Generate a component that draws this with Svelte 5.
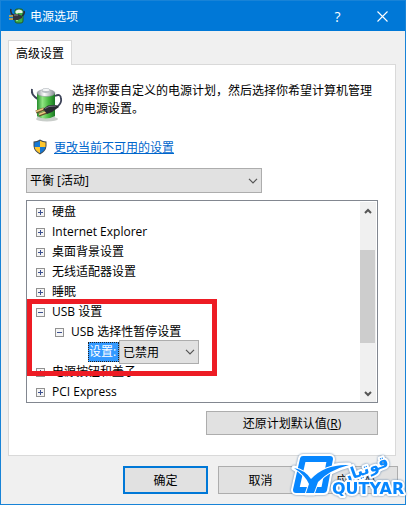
<script>
	let plan = $state("平衡 [活动]");
	let suspend = $state("已禁用");
	let open = $state({ usb: true, suspend: true });

	const before = ["硬盘", "Internet Explorer", "桌面背景设置", "无线适配器设置", "睡眠"];
	const after = ["电源按钮和盖子", "PCI Express"];
</script>

{#snippet expander(isOpen, name, toggle)}
	<button class="expander" aria-label={name} aria-expanded={isOpen} onclick={toggle}>
		<svg viewBox="0 0 9 9" width="9" height="9" shape-rendering="crispEdges">
			<rect x="0.5" y="0.5" width="8" height="8" fill="#f5f5f5" stroke="#919191" />
			<path d={isOpen ? "M2 4.5H7" : "M2 4.5H7M4.5 2V7"} stroke="#3b4f8f" />
		</svg>
	</button>
{/snippet}

{#snippet chevron()}
	<svg class="chevron" viewBox="0 0 10 6" width="10" height="6">
		<path d="M1 0.8L5 4.8L9 0.8" fill="none" stroke="#555" stroke-width="1.2" />
	</svg>
{/snippet}

{#snippet scrollArrow(d)}
	<svg viewBox="0 0 8 6" width="8" height="6">
		<path {d} fill="none" stroke="#555" stroke-width="2" />
	</svg>
{/snippet}

<main class="window">
	<header>
		<svg class="app-icon" viewBox="0 0 16 16" width="16" height="16">
			<rect x="6" y="1" width="8" height="14" rx="2" fill="#3fae49" stroke="#235f2b" />
			<path d="M6.500 3Q10 0 13.500 3V5H6.500Z" fill="#e5f3e5" />
			<path d="M8 5V13" stroke="#a4ec9c" stroke-width="1.500" />
			<path d="M2 1Q1 5 4 7M13 8Q16 6 15 3" fill="none" stroke="#282a35" stroke-width="1.500" />
			<path d="M0 8H5M0 11H5" stroke="#e4aa36" stroke-width="1.500" />
			<path d="M4 6L9 6L13 8V10L9 12H4Z" fill="#34343c" />
			<path d="M5 7H9" stroke="#8d8d94" />
		</svg>
		<h1>电源选项</h1>
		<button class="caption" aria-label="帮助">?</button>
		<button class="caption" aria-label="关闭">
			<svg viewBox="0 0 11 11" width="11" height="11">
				<path d="M0.500 0.500L10.500 10.500M10.500 0.500L0.500 10.500" stroke="#fff" stroke-width="1.100" />
			</svg>
		</button>
	</header>

	<div class="content">
		<div class="tabs" role="tablist">
			<button class="tab" role="tab" aria-selected="true">高级设置</button>
		</div>

		<section class="panel">
			<div class="intro">
				<svg class="battery" viewBox="0 0 32 34" width="32" height="34">
					<defs>
						<linearGradient id="cell">
							<stop offset="0" stop-color="#258c2c" />
							<stop offset="0.3" stop-color="#91e583" />
							<stop offset="0.65" stop-color="#45b83f" />
							<stop offset="1" stop-color="#1b7625" />
						</linearGradient>
						<linearGradient id="metal">
							<stop offset="0" stop-color="#8e969b" />
							<stop offset="0.4" stop-color="#fff" />
							<stop offset="1" stop-color="#818a90" />
						</linearGradient>
					</defs>
					<ellipse cx="16" cy="31" rx="11" ry="2.500" fill="#c9cdca" />
					<path d="M1 1Q0 6 4 9Q6 11 8 11" fill="none" stroke="#3d4358" stroke-width="2" />
					<path d="M6 5V29Q14 34 24 29V5Z" fill="url(#cell)" />
					<path d="M6 28Q14 33 24 28V30Q15 35 6 30Z" fill="#c7d0c9" />
					<ellipse cx="15" cy="5" rx="9" ry="3.500" fill="url(#metal)" stroke="#899095" stroke-width="0.500" />
					<path d="M11 2V4Q15 6 19 4V2Z" fill="#b7bec3" />
					<ellipse cx="15" cy="2" rx="4" ry="1.600" fill="#f6f8f9" stroke="#9ca3a8" stroke-width="0.500" />
					<path d="M24 8Q30 5 30 11Q31 15 26 19" fill="none" stroke="#3d4358" stroke-width="1.800" />
					<path d="M5 24L13 21M8 27L16 24" stroke="#69502b" stroke-width="3" />
					<path d="M5 23.500L13 20.500M8 26.500L16 23.500" stroke="#e7c880" stroke-width="1.700" />
					<path d="M12 21L17 17.500L25 17L28 19L21 24L16 26Z" fill="#292a31" />
					<path d="M14 20.500L18 18.500L25 18" fill="none" stroke="#747580" />
				</svg>
				<p>选择你要自定义的电源计划，然后选择你希望计算机管理的电源设置。</p>
			</div>

			<div class="elevate">
				<svg viewBox="0 0 14 16" width="14" height="16">
					<path d="M7 0.500Q10 2.500 13.500 2.500V7Q13 12.500 7 15.500Q1 12.500 0.500 7V2.500Q4 2.500 7 0.500Z" fill="#424a50" />
					<path d="M7 1.700V8H1.500V3.500Q4.500 3.300 7 1.700Z" fill="#1678d3" />
					<path d="M7 1.700V8H12.500V3.500Q9.500 3.300 7 1.700Z" fill="#ffc72e" />
					<path d="M1.600 8H7V14.300Q2.200 12 1.600 8Z" fill="#ffc72e" />
					<path d="M12.400 8H7V14.300Q11.800 12 12.400 8Z" fill="#1678d3" />
				</svg>
				<a href="#settings">更改当前不可用的设置</a>
			</div>

			<div class="combo plan">
				<select aria-label="电源计划" bind:value={plan}>
					<option>平衡 [活动]</option>
				</select>
				{@render chevron()}
			</div>

			<div class="tree" id="settings">
				<ul>
					{#each before as name}
						<li><div class="row">{@render expander(false, name)}<span>{name}</span></div></li>
					{/each}
					<li>
						<div class="row">
							{@render expander(open.usb, "USB 设置", () => (open.usb = !open.usb))}
							<span>USB 设置</span>
						</div>
						{#if open.usb}
							<ul class="nested">
								<li>
									<div class="row">
										{@render expander(open.suspend, "USB 选择性暂停设置", () => (open.suspend = !open.suspend))}
										<span>USB 选择性暂停设置</span>
									</div>
									{#if open.suspend}
										<div class="row setting">
											<label for="suspend">设置:</label>
											<div class="combo">
												<select id="suspend" bind:value={suspend}>
													<option>已禁用</option>
													<option>已启用</option>
												</select>
												{@render chevron()}
											</div>
										</div>
									{/if}
								</li>
							</ul>
						{/if}
					</li>
					{#each after as name}
						<li><div class="row">{@render expander(false, name)}<span>{name}</span></div></li>
					{/each}
				</ul>
				<div class="scrollbar">
					<button aria-label="向上滚动">{@render scrollArrow("M1 5L4 2L7 5")}</button>
					<div class="track"><div class="thumb"></div></div>
					<button aria-label="向下滚动">{@render scrollArrow("M1 1L4 4L7 1")}</button>
				</div>
				<div class="highlight"></div>
			</div>

			<button class="btn restore">还原计划默认值(<u>R</u>)</button>
		</section>

		<footer>
			<button class="btn primary">确定</button>
			<button class="btn">取消</button>
			<button class="btn">应用(<u>A</u>)</button>
		</footer>
	</div>

	<svg class="watermark" viewBox="0 0 118 52" width="118" height="52">
		<g class="halo">
			<path d="M16 9H43L37 40H9Z" />
			<path d="M7 18Q18 20 24 29Q38 14 62 15Q42 20 31 32L27 43H19L22 34Q18 25 7 18Z" />
		</g>
		<path class="box" d="M16 9H43L37 40H9Z" />
		<path class="swoosh" d="M7 18Q18 20 24 29Q38 14 62 15Q42 20 31 32L27 43H19L22 34Q18 25 7 18Z" />
		<text class="persian" x="80" y="24" transform="rotate(-20 80 24)">قوتیار</text>
		<text class="latin" x="45" y="44">QUTYAR</text>
	</svg>
</main>

<style>
	:global(body) {
		margin: 0;
		background: #fff;
	}
	.window, .window button, .window select {
		font-family: "Open Sans", "Noto Sans CJK SC", sans-serif;
		font-size: 12px;
		color: #000;
	}
	.window {
		position: relative;
		box-sizing: border-box;
		margin-right: 5px;
		border: 1px solid #1883d7;
		background: #f0f0f0;
	}
	button {
		padding: 0;
		border: 0;
		background: none;
	}
	svg {
		display: block;
		flex: none;
	}
	header {
		display: flex;
		align-items: center;
		height: 30px;
		padding-left: 8px;
		background: #0078d7;
	}
	h1 {
		flex: 1;
		margin: 0 0 0 5px;
		font-size: 12px;
		font-weight: normal;
		color: #fff;
	}
	.window .caption {
		display: flex;
		align-items: center;
		justify-content: center;
		width: 45px;
		height: 30px;
		font-size: 14px;
		color: #fff;
	}
	.content {
		padding: 9px 9px 10px 7px;
	}
	.tabs {
		display: flex;
	}
	.tab {
		position: relative;
		height: 25px;
		margin-bottom: -1px;
		padding: 0 7px;
		border: 1px solid #d9d9d9;
		border-bottom: 0;
		background: #fff;
	}
	.panel {
		display: flex;
		flex-direction: column;
		padding: 17px 17px 20px;
		border: 1px solid #d9d9d9;
		background: #fff;
	}
	.intro {
		display: flex;
		gap: 9px;
		padding-left: 5px;
	}
	.battery {
		margin-top: 6px;
	}
	p {
		margin: 0;
		line-height: 18px;
	}
	.elevate {
		display: flex;
		align-items: center;
		gap: 7px;
		height: 18px;
		margin: 16px 0 12px;
		padding-left: 7px;
	}
	a {
		color: #0066cc;
	}
	.combo {
		display: grid;
		align-items: center;
		height: 24px;
	}
	.combo select, .combo .chevron {
		grid-area: 1 / 1;
	}
	.combo select {
		appearance: none;
		box-sizing: border-box;
		width: 100%;
		height: 100%;
		margin: 0;
		padding: 0 20px 0 3px;
		border: 1px solid #adadad;
		border-radius: 0;
		background: #e1e1e1;
	}
	.combo .chevron {
		justify-self: end;
		margin-right: 4px;
		pointer-events: none;
	}
	.plan {
		width: 67%;
		height: 25px;
	}
	.tree {
		position: relative;
		display: flex;
		margin-top: 7px;
		padding: 1px 1px 0;
		border: 1px solid #828790;
	}
	ul {
		flex: 1;
		margin: 0;
		padding: 0 0 0 8px;
		list-style: none;
	}
	.nested {
		padding-left: 19px;
	}
	.row {
		display: flex;
		align-items: center;
		gap: 7px;
		height: 20px;
		line-height: 20px;
	}
	.expander {
		display: flex;
	}
	.setting {
		position: relative;
		gap: 0;
		padding-left: 33px;
	}
	.setting label {
		box-sizing: border-box;
		width: 31px;
		padding-left: 1px;
		outline: 1px dotted #222;
		outline-offset: -1px;
		line-height: 20px;
		background: #3399ff;
		color: #fff;
		white-space: nowrap;
	}
	.setting .combo {
		width: 80px;
	}
	.scrollbar {
		display: flex;
		flex-direction: column;
		width: 16px;
		background: #f0f0f0;
	}
	.scrollbar button {
		display: grid;
		place-items: center;
		height: 17px;
	}
	.track {
		flex: 1;
		display: flex;
		flex-direction: column;
		padding: 31px 1px 42px 0;
	}
	.thumb {
		flex: 1;
		background: #cdcdcd;
	}
	.highlight {
		position: absolute;
		top: 98px;
		left: 0;
		box-sizing: border-box;
		width: 190px;
		height: 77px;
		border: 5px solid #ed1c24;
		pointer-events: none;
	}
	.btn {
		height: 28px;
		border: 1px solid #adadad;
		background: #e1e1e1;
	}
	.restore {
		align-self: flex-end;
		width: 172px;
		height: 24px;
		margin-top: 8px;
	}
	.primary {
		border: 2px solid #0078d7;
	}
	footer {
		display: flex;
		justify-content: flex-end;
		gap: 10px;
		margin: 10px -2px 0 0;
	}
	footer .btn {
		width: 85px;
	}
	.watermark {
		position: absolute;
		right: 0;
		bottom: 2px;
		overflow: visible;
		pointer-events: none;
		filter: drop-shadow(0 0 1px #6386ac);
	}
	.halo {
		fill: #fff;
		stroke: #fff;
		stroke-width: 10px;
		stroke-linejoin: round;
	}
	.halo path:last-child {
		stroke-width: 5px;
	}
	.box {
		fill: #fff;
		stroke: #0787ff;
		stroke-width: 6px;
		stroke-linejoin: round;
	}
	.swoosh {
		fill: #0787ff;
		stroke: #fff;
		stroke-width: 2px;
		paint-order: stroke;
	}
	.watermark text {
		fill: #0787ff;
		stroke: #fff;
		stroke-width: 4px;
		stroke-linejoin: round;
		paint-order: stroke;
	}
	.persian {
		font: bold 16px "DejaVu Sans", sans-serif;
		text-anchor: middle;
	}
	.latin {
		font: bold 16px "DejaVu Sans", sans-serif;
	}
</style>
